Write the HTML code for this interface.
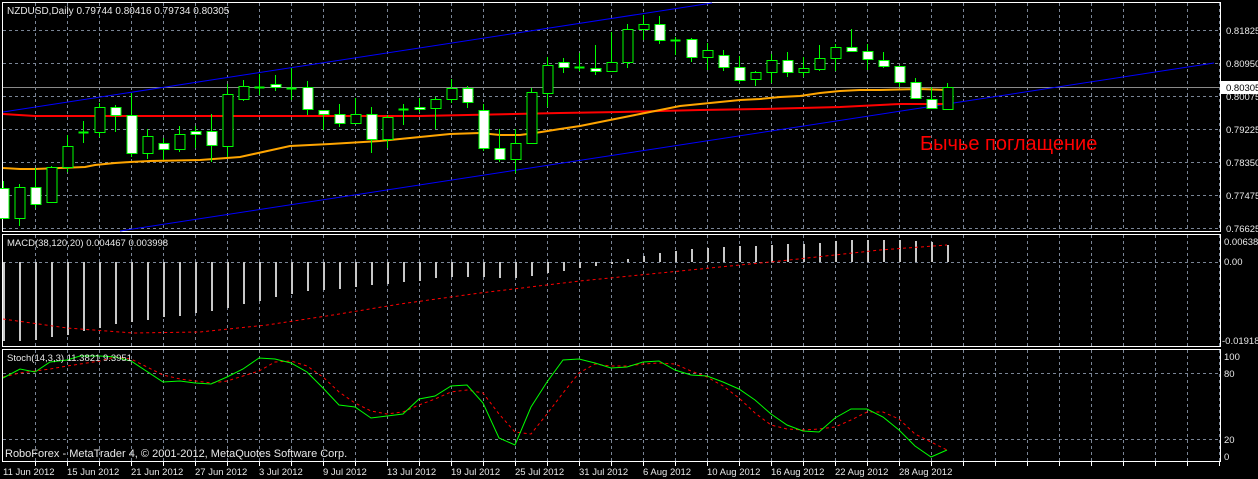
<!DOCTYPE html>
<html><head><meta charset="utf-8">
<style>
html,body{margin:0;padding:0;background:#000;width:1258px;height:479px;overflow:hidden}
svg{display:block}
text{font-family:"Liberation Sans",sans-serif;font-size:9.5px;fill:#e8e8e8}
</style></head><body>
<svg id="s" width="1258" height="479" xmlns="http://www.w3.org/2000/svg">
<rect width="1258" height="479" fill="#000"/>
<g id="grid" stroke="#7a8596" stroke-width="1" stroke-dasharray="3,3"></g>
<g stroke="#fff" stroke-width="1" fill="none">
<path d="M2.5 2.5H1220.5V231.5H2.5Z"/>
<path d="M2.5 234.5H1220.5V346.5H2.5Z"/>
<path d="M2.5 349.5H1220.5V461.5H2.5Z"/>
</g>
<line x1="3" y1="87.5" x2="1220" y2="87.5" stroke="#8a8a8a"/>
<g id="ind"></g>
<g id="cd"></g>
<text x="7" y="14" style="font-size:10px">NZDUSD,Daily  0.79744 0.80416 0.79734 0.80305</text>
<text x="7" y="246">MACD(38,120,20) 0.004467 0.003998</text>
<text x="7" y="361">Stoch(14,3,3) 11.3821 9.3951</text>
<text x="5" y="457" style="font-size:11px">RoboForex - MetaTrader 4, © 2001-2012, MetaQuotes Software Corp.</text>
<text x="920" y="150" style="font-size:20px;fill:#ff0000">Бычье поглащение</text>
<g>
<text x="1226" y="34">0.81825</text>
<text x="1226" y="67">0.80950</text>
<text x="1226" y="100">0.80075</text>
<text x="1226" y="133">0.79225</text>
<text x="1226" y="166">0.78350</text>
<text x="1226" y="199">0.77475</text>
<text x="1226" y="232">0.76625</text>
<rect x="1221" y="81" width="37" height="13" fill="#fff"/>
<text x="1226" y="91" style="fill:#000">0.80305</text>
<text x="1224" y="245">0.00638</text>
<text x="1224" y="265">0.00</text>
<text x="1222" y="344">-0.01918</text>
<text x="1224" y="360">100</text>
<text x="1224" y="377">80</text>
<text x="1224" y="443">20</text>
<text x="1224" y="460">0</text>
</g>
<g>
<text x="3" y="475">11 Jun 2012</text>
<text x="67" y="475">15 Jun 2012</text>
<text x="131" y="475">21 Jun 2012</text>
<text x="195" y="475">27 Jun 2012</text>
<text x="259" y="475">3 Jul 2012</text>
<text x="323" y="475">9 Jul 2012</text>
<text x="387" y="475">13 Jul 2012</text>
<text x="451" y="475">19 Jul 2012</text>
<text x="515" y="475">25 Jul 2012</text>
<text x="579" y="475">31 Jul 2012</text>
<text x="643" y="475">6 Aug 2012</text>
<text x="707" y="475">10 Aug 2012</text>
<text x="771" y="475">16 Aug 2012</text>
<text x="835" y="475">22 Aug 2012</text>
<text x="899" y="475">28 Aug 2012</text>
</g>
</svg>
<script>
var NS="http://www.w3.org/2000/svg";
function el(p,t,a){var e=document.createElementNS(NS,t);for(var k in a)e.setAttribute(k,a[k]);p.appendChild(e);return e;}
var g=document.getElementById('grid');
for(var x=35.5;x<1220;x+=32){[[3,231],[235,346],[350,461]].forEach(function(r){el(g,'line',{x1:x,y1:r[0],x2:x,y2:r[1]});});
 el(g,'line',{x1:x,y1:462,x2:x,y2:466,'stroke-dasharray':'none',stroke:'#fff'});}
[30.5,63.5,96.5,129.5,162.5,195.5,228.5,262.5,373.5,439.5].forEach(function(y){el(g,'line',{x1:3,y1:y,x2:1220,y2:y});});
var ind=document.getElementById('ind');
function pl(pts,a){a.points=pts.map(function(p){return p.join(',')}).join(' ');a.fill='none';el(ind,'polyline',a);}
el(ind,'line',{x1:3,y1:112,x2:712,y2:3,stroke:'#0000ff','stroke-width':1});
el(ind,'line',{x1:120,y1:231,x2:1214,y2:63,stroke:'#0000ff','stroke-width':1});
var mb=[341,341,340,337,335,331,328,324,322,320,317,316,313,311,308,304,301,297,294,291,290,289,287,285,284,282,281,278,277,277,277,278,278,276,273,271,268,266,264,259,256,253,251,249,248,247,246,246,245,244,244,243,241,240,240,240,240,241,242,245];
mb.forEach(function(v,k){var c=3+16*k;var y1=Math.min(v,262),y2=Math.max(v,262);el(ind,'rect',{x:c,y:y1,width:2,height:Math.max(1,y2-y1),fill:'#c8c8c8'});});
pl([[3,319],[67,328],[133,333],[200,332],[267,325],[333,315],[400,304],[480,293],[580,281],[680,271],[780,261],[880,250],[947,245]],{stroke:'#ff0000','stroke-dasharray':'3,3'});
pl([[3,114],[35,116],[150,116],[300,116],[420,116],[560,113],[620,112],[700,110],[760,109],[840,107],[900,104],[947,104]],{stroke:'#ff0000','stroke-width':2});
pl([[3,168],[20,169],[35,169],[60,168],[85,167],[95,165],[115,163],[130,162],[150,161],[200,160],[240,157],[290,146],[330,144],[380,141],[420,137],[450,134],[480,133],[500,135],[520,135],[535,133],[560,129],[580,126],[600,122],[620,118],[640,114],[660,110],[680,106],[700,104],[720,102],[740,100],[760,99],[780,97],[800,96],[820,93],[840,91],[860,90],[880,90],[920,89],[947,90]],{stroke:'#ffa500','stroke-width':2});
pl([[3,377],[20,373],[50,369],[67,366],[100,361],[115,357],[131,359],[163,375],[180,379],[211,383],[227,381],[243,376],[259,371],[275,362],[291,361],[307,366],[323,377],[339,392],[355,403],[371,411],[387,414],[403,412],[419,405],[435,399],[451,392],[467,390],[483,393],[499,414],[515,432],[531,434],[547,414],[563,393],[579,373],[595,364],[611,366],[627,366],[643,364],[659,363],[675,364],[691,371],[707,377],[723,386],[739,398],[755,413],[771,425],[787,429],[803,430],[819,429],[835,427],[851,420],[867,412],[883,412],[899,419],[915,434],[931,442],[947,450]],{stroke:'#ff0000','stroke-dasharray':'3,3'});
pl([[3,378],[20,369],[35,372],[50,362],[67,360],[80,356],[100,356],[115,357],[131,361],[163,382],[180,381],[195,383],[211,384],[227,377],[243,369],[259,358],[275,359],[291,363],[307,372],[323,388],[339,405],[355,407],[371,418],[387,416],[403,414],[419,399],[435,396],[451,386],[467,385],[483,403],[499,438],[515,445],[531,407],[547,382],[563,360],[579,359],[595,363],[611,368],[627,367],[643,362],[659,361],[675,370],[691,375],[707,376],[723,382],[739,389],[755,400],[771,414],[787,425],[803,431],[819,432],[835,418],[851,409],[867,409],[883,417],[899,430],[915,446],[931,457],[947,450]],{stroke:'#00ff00'});
var C=[['w',188,218,181,218],['h',187,218,184,226],['w',187,204,168,208],['h',167,202,166,203],['h',146,167,135,172],['d',132,132,121,143],['h',107,132,103,137],['w',107,115,105,132],['w',115,153,93,157],['h',136,153,129,159],['w',143,149,138,160],['h',134,149,126,152],['w',131,134,126,148],['w',131,145,114,162],['h',94,146,84,157],['h',86,99,80,101],['d',87,87,74,95],['w',84,87,75,91],['d',88,88,68,100],['w',87,109,81,115],['w',110,114,110,130],['w',114,123,104,127],['h',114,123,98,124],['w',114,139,107,153],['h',117,139,115,148],['d',109,109,104,125],['w',107,109,98,112],['h',99,108,97,129],['h',88,99,79,103],['w',88,102,86,108],['w',110,148,104,151],['w',148,159,129,162],['h',143,159,129,173],['h',92,143,88,143],['h',65,93,57,107],['w',62,67,58,73],['d',67,67,53,71],['w',68,71,45,75],['h',62,71,32,72],['h',29,62,24,68],['h',24,29,15,40],['w',24,40,16,44],['d',40,40,37,55],['w',39,57,38,62],['h',50,57,43,70],['w',55,67,50,71],['w',67,80,56,83],['h',72,79,71,86],['h',60,72,54,83],['w',60,72,52,77],['h',68,72,57,77],['h',58,69,45,71],['h',47,58,44,71],['w',47,51,29,52],['w',51,59,44,70],['w',60,66,52,68],['w',66,82,66,87],['w',82,98,78,98],['w',99,108,87,108],['h',87,109,83,109]];
var cd=document.getElementById('cd');
C.forEach(function(d,k){var c=3.5+16*k;
 el(cd,'line',{x1:c,y1:d[3],x2:c,y2:d[4],stroke:'#00ff00'});
 if(d[0]=='d'){el(cd,'line',{x1:c-5,y1:d[1]+0.5,x2:c+5,y2:d[1]+0.5,stroke:'#00ff00','stroke-width':2});}
 else el(cd,'rect',{x:c-4.5,y:d[1]+0.5,width:10,height:Math.max(1,d[2]-d[1]),fill:d[0]=='w'?'#fff':'#000',stroke:'#00ff00'});
});
</script>
</body></html>
